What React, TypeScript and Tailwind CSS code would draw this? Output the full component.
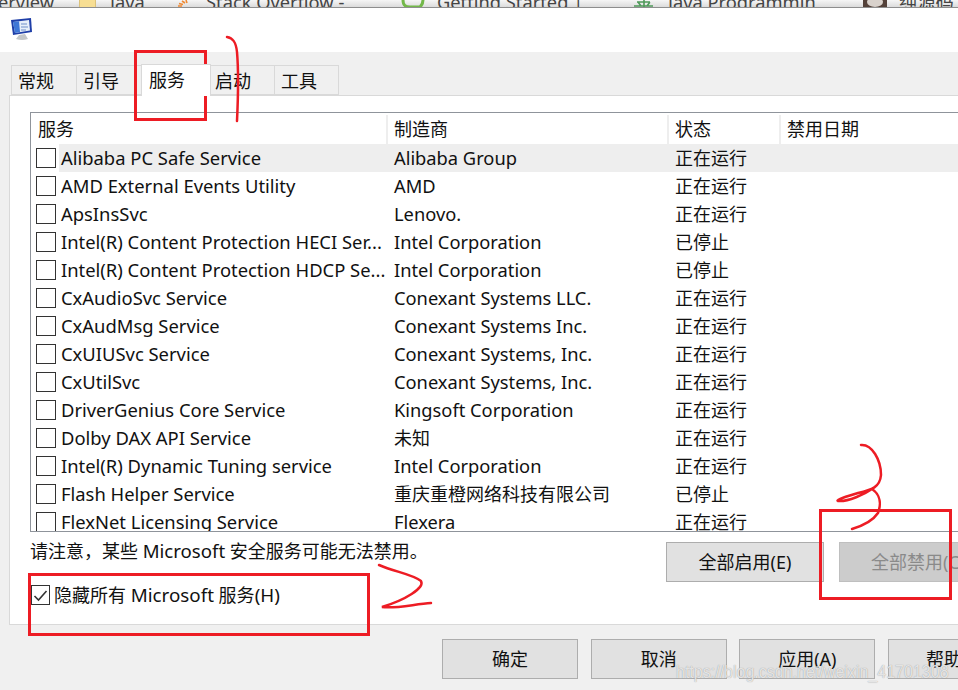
const font = { fontFamily: '"Noto Sans","Noto Sans CJK SC",sans-serif' };

const rows: [string, string, string, boolean?][] = [
  ["Alibaba PC Safe Service", "Alibaba Group", "正在运行", true],
  ["AMD External Events Utility", "AMD", "正在运行"],
  ["ApsInsSvc", "Lenovo.", "正在运行"],
  ["Intel(R) Content Protection HECI Ser...", "Intel Corporation", "已停止"],
  ["Intel(R) Content Protection HDCP Se...", "Intel Corporation", "已停止"],
  ["CxAudioSvc Service", "Conexant Systems LLC.", "正在运行"],
  ["CxAudMsg Service", "Conexant Systems Inc.", "正在运行"],
  ["CxUIUSvc Service", "Conexant Systems, Inc.", "正在运行"],
  ["CxUtilSvc", "Conexant Systems, Inc.", "正在运行"],
  ["DriverGenius Core Service", "Kingsoft Corporation", "正在运行"],
  ["Dolby DAX API Service", "未知", "正在运行"],
  ["Intel(R) Dynamic Tuning service", "Intel Corporation", "正在运行"],
  ["Flash Helper Service", "重庆重橙网络科技有限公司", "已停止"],
  ["FlexNet Licensing Service", "Flexera", "正在运行"],
];

function Btn({ label, w, disabled }: { label: string; w: string; disabled?: boolean }) {
  return (
    <div className={`${w} h-[40px] shrink-0 flex items-center justify-center border whitespace-nowrap overflow-hidden ${disabled ? "bg-[#cccccc] border-[#bfbfbf] text-[#8a8a8a]" : "bg-[#e1e1e1] border-[#adadad] text-[#111]"}`}>
      {label}
    </div>
  );
}

function Tab({ label, w, pad, active }: { label: string; w: string; pad: string; active?: boolean }) {
  return (
    <div className={`${w} ${pad} shrink-0 -ml-px border border-[#d9d9d9] ${active ? "h-[32px] bg-white border-b-0 pt-[1px] relative z-10 -mb-px" : "h-[30px] bg-[#f0f0f0] pt-[1px]"}`}>
      {label}
    </div>
  );
}

function Strip() {
  const t = "absolute top-[-12px] whitespace-nowrap text-[18.3px]";
  return (
    <div className="h-[8px] bg-gradient-to-b from-[#f6f6f6] to-[#dcdcdc] border-b border-[#8e8e8e] overflow-hidden relative text-[#444]">
      <span className={`${t} left-[-2px]`}>erview</span>
      <svg className="absolute left-[79px] top-0" width="18" height="7"><rect x="1" width="16" height="7" fill="#f7de93" /><rect x="0" width="1" height="7" fill="#dcc27a" /><rect x="16" width="1" height="7" fill="#dcc27a" /></svg>
      <span className={`${t} left-[110px]`}>Java</span>
      <svg className="absolute left-[177px] top-0" width="15" height="7" fill="none" stroke="#ef8a34" strokeWidth="1.6"><path d="M1 6 L5 6M2 3.5 L6 4.5M5 1 L8 3M9 0 L10 3" /></svg>
      <span className={`${t} left-[206px]`}>Stack Overflow -</span>
      <svg className="absolute left-[400px] top-0" width="26" height="7" fill="none"><path d="M3 0 C3 6 6 7 10 7 L20 7 C22 5 23 3 23 0" stroke="#73b84a" strokeWidth="3" /></svg>
      <span className={`${t} left-[437px]`}>Getting Started |</span>
      <svg className="absolute left-[633px] top-0" width="22" height="7" fill="none" stroke="#4f9a5a" strokeWidth="1.6"><path d="M1 6 H20M4 2 H17M11 0 V7M5 2 L8 6M17 2 L14 6" /></svg>
      <span className={`${t} left-[668px]`}>Java Programmin</span>
      <svg className="absolute left-[863px] top-0" width="24" height="7"><rect width="24" height="7" fill="#54423a" /><ellipse cx="12" cy="2" rx="8" ry="5" fill="#d9d2cc" /></svg>
      <span className={`${t} left-[899px]`}>纯源码</span>
    </div>
  );
}

export default function App() {
  return (
    <div className="relative w-[958px] h-[690px] overflow-hidden bg-[#f0f0f0] text-[18px] leading-[28px] text-[#111]" style={font}>
      <Strip />
      <div className="h-[44px] bg-white pl-[10px] pt-[9px]">
        <svg width="24" height="24" viewBox="0 0 24 24">
          <path d="M1 3 L21 1 L22 15 L3 18 Z" fill="#1f3fa8" />
          <path d="M3 5 L19 3 L20 13.5 L5 16 Z" fill="#e6eef9" />
          <path d="M3 5 L9 4.3 L10 15 L5 16 Z" fill="#3f77d6" />
          <path d="M11 7h6M11 10h7M11 13h5" stroke="#6f8fc9" strokeWidth="1" />
          <path d="M9 18 L15 17 L18 22 Q12 24 6 22 Z" fill="#c4c7c9" />
        </svg>
      </div>
      <div className="flex items-end pl-[12px] h-[43px]">
        <Tab label="常规" w="w-[66px]" pad="pl-[6px]" />
        <Tab label="引导" w="w-[66px]" pad="pl-[6px]" />
        <Tab label="服务" w="w-[70px]" pad="pl-[7px]" active />
        <Tab label="启动" w="w-[65px]" pad="pl-[4px]" />
        <Tab label="工具" w="w-[65px]" pad="pl-[6px]" />
      </div>
      <div className="ml-[9px] h-[530px] w-[960px] bg-white border border-[#d9d9d9] pl-[20px] pt-[16px]">
        <div className="h-[420px] border border-[#8f949b] border-r-0 overflow-hidden">
          <div className="flex h-[31px] pt-[2px]">
            <div className="w-[357px] pl-[7px] border-r-2 border-[#eeeeee]">服务</div>
            <div className="w-[281px] pl-[6px] border-r-2 border-[#eeeeee]">制造商</div>
            <div className="w-[112px] pl-[6px] border-r-2 border-[#eeeeee]">状态</div>
            <div className="pl-[6px]">禁用日期</div>
          </div>
          {rows.map(([name, vendor, status, hi]) => (
            <div key={name} className="flex h-[28px] items-center">
              <div className="w-[28px] shrink-0 pl-[5px]">
                <div className="w-[20px] h-[20px] border border-[#333] bg-white" />
              </div>
              <div className={`flex flex-1 h-[28px] items-center ${hi ? "bg-[#eeeeee]" : ""}`}>
                <div className="w-[335px] pl-[2px] whitespace-nowrap text-[18.4px]">{name}</div>
                <div className={`w-[281px] whitespace-nowrap ${/[^\x00-\x7f]/.test(vendor) ? "text-[18px]" : "text-[18.3px]"}`}>{vendor}</div>
                <div className="whitespace-nowrap">{status}</div>
              </div>
            </div>
          ))}
        </div>
        <div className="flex h-[48px] w-[1000px]">
          <div className="pt-[5px] w-[636px] shrink-0 whitespace-nowrap">请注意，某些 <span className="text-[18.6px]">Microsoft</span> 安全服务可能无法禁用。</div>
          <div className="flex gap-[15px] pt-[10px]">
            <Btn label="全部启用(E)" w="w-[158px]" />
            <Btn label="全部禁用(C)" w="w-[158px]" disabled />
          </div>
        </div>
        <div className="flex items-center h-[30px] ml-px">
          <div className="w-[19px] h-[20px] border border-[#333] flex items-center justify-center">
            <svg width="15" height="15" viewBox="0 0 15 15"><path d="M1.5 8 L5.5 12 L13.5 3" fill="none" stroke="#333" strokeWidth="1.6" /></svg>
          </div>
          <span className="ml-[4px] whitespace-nowrap">隐藏所有 <span className="text-[18.8px]">Microsoft</span> 服务<span className="text-[18.8px]">(H)</span></span>
        </div>
      </div>
      <div className="flex gap-[12.7px] pl-[442px] pt-[14px]">
        <Btn label="确定" w="w-[136px]" />
        <Btn label="取消" w="w-[136px]" />
        <Btn label="应用(A)" w="w-[136px]" />
        <Btn label="帮助(H)" w="w-[136px]" />
      </div>
      <div className="absolute left-[676px] top-[660px] text-[18px] leading-[24px] text-white/75 whitespace-nowrap origin-left scale-x-[0.89]" style={{ fontFamily: '"Liberation Sans",sans-serif', textShadow: "0 0 1px #888" }}>
        https://blog.csdn.net/weixin_41701308
      </div>
      <svg className="absolute inset-0 pointer-events-none" width="958" height="690" fill="none" stroke="#ed1c24">
        <rect x="135.5" y="51.5" width="70" height="68" strokeWidth="3" />
        <rect x="29.5" y="574.5" width="339" height="60" strokeWidth="3" />
        <rect x="820.5" y="510.5" width="130" height="88" strokeWidth="3" />
        <path d="M227 37 C233 38 236 42 237 52 C239 75 238 100 237 121" strokeWidth="2.5" strokeLinecap="round" />
        <path d="M379 565 C395 572 412 574 421 581 C425 588 405 600 382 607 C395 609 415 604 431 603" strokeWidth="2.5" strokeLinecap="round" />
        <path d="M861 445 C872 444 881 460 881 475 C880 487 872 490 858 493 C848 496 835 500 838 501 C848 502 865 494 872 489 C881 495 881 505 878 513 C872 522 862 526 852 529" strokeWidth="2.5" strokeLinecap="round" />
      </svg>
    </div>
  );
}
